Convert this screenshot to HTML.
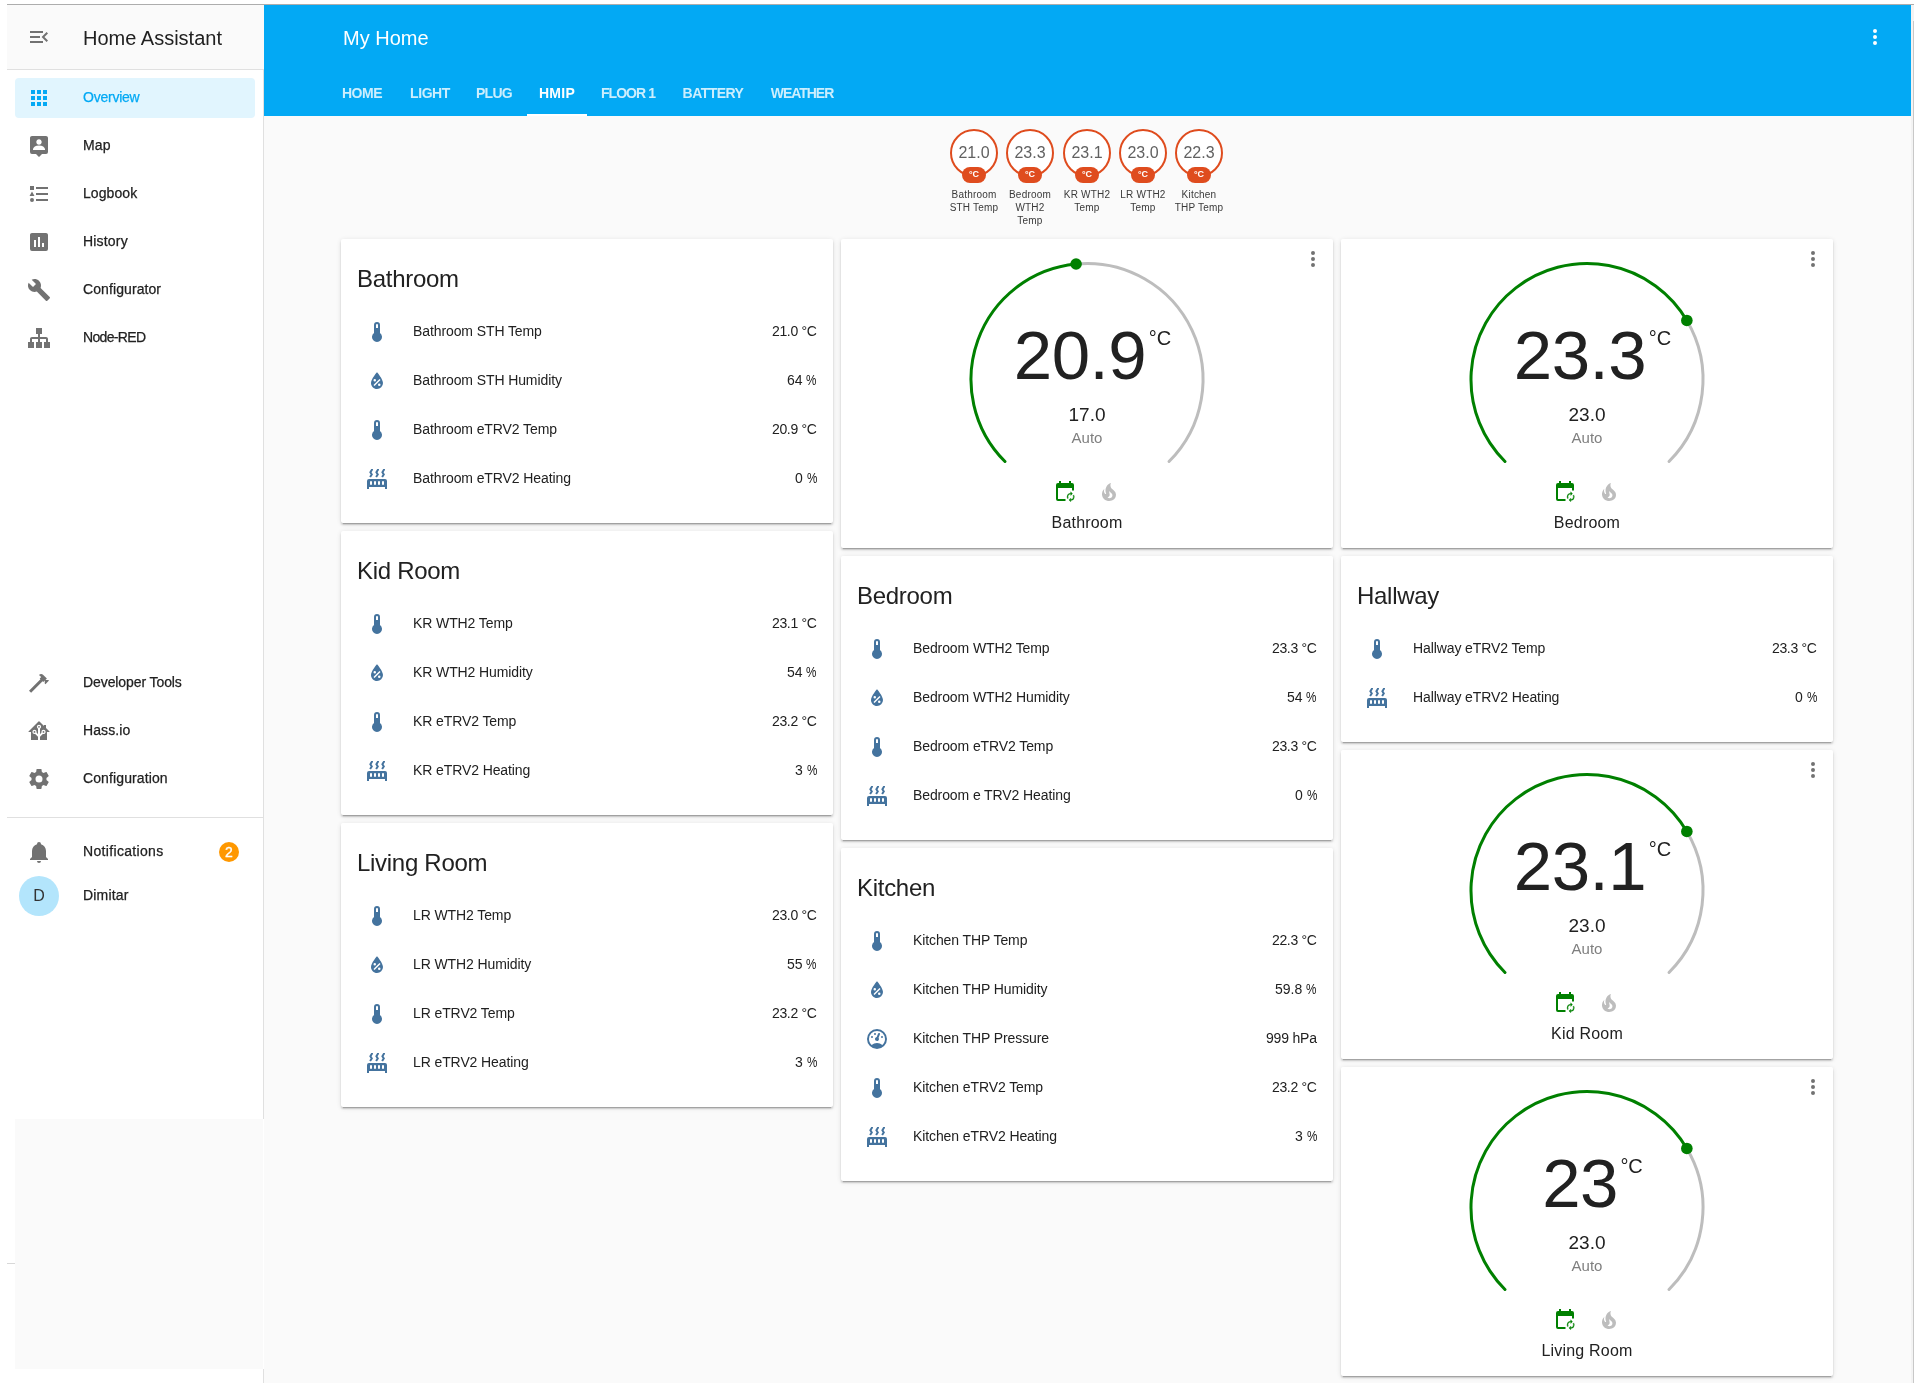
<!DOCTYPE html>
<html><head><meta charset="utf-8"><title>Home Assistant</title>
<style>
*{box-sizing:border-box;margin:0;padding:0}
html,body{width:1914px;height:1392px;overflow:hidden;background:#fff;font-family:"Liberation Sans",sans-serif;color:#212121}
.a{position:absolute}
.t{position:absolute;white-space:nowrap;will-change:transform}
.card{position:absolute;background:#fff;border-radius:2px;box-shadow:0 2px 2px 0 rgba(0,0,0,.14),0 1px 5px 0 rgba(0,0,0,.12),0 3px 1px -2px rgba(0,0,0,.2)}
</style></head><body>
<div class="a" style="left:7px;top:4px;width:1907px;height:1px;background:#adadad"></div>
<div class="a" style="left:264px;top:5px;width:1647px;height:1378px;background:#fafafa"></div>
<div class="a" style="left:7px;top:5px;width:257px;height:64px;background:#fafafa"></div>
<div class="a" style="left:7px;top:69px;width:257px;height:1px;background:#e0e0e0"></div>
<div class="a" style="left:7px;top:70px;width:256px;height:1049px;background:#fff"></div>
<div class="a" style="left:263px;top:70px;width:1px;height:1049px;background:#e0e0e0"></div>
<div class="a" style="left:15px;top:1119px;width:248px;height:250px;background:#fafafa"></div>
<div class="a" style="left:263px;top:1369px;width:1px;height:14px;background:#e0e0e0"></div>
<div class="a" style="left:7px;top:1263px;width:8px;height:1px;background:#d8d8d8"></div>
<div class="a" style="left:1911px;top:5px;width:3px;height:1378px;background:#f3f3f3"></div>
<div class="a" style="left:1913px;top:21px;width:1px;height:1362px;background:#c8c8c8"></div>
<svg class="a" style="left:27px;top:25px;width:24px;height:24px" viewBox="0 0 24 24"><path fill="#727272" d="M21,15.61L19.59,17L14.58,12L19.59,7L21,8.39L17.44,12L21,15.61M3,6H16V8H3V6M3,13V11H13V13H3M3,18V16H16V18H3Z"/></svg>
<div class="t" style="left:83.00px;top:27.57px;font-size:20px;line-height:20px;color:#212121;font-weight:400;">Home Assistant</div>
<div class="a" style="left:15px;top:78px;width:240px;height:40px;background:#e1f5fe;border-radius:4px"></div>
<svg class="a" style="left:27px;top:86px;width:24px;height:24px" viewBox="0 0 24 24"><path fill="#03a9f4" d="M16,20H20V16H16M16,14H20V10H16M10,8H14V4H10M16,8H20V4H16M10,14H14V10H10M4,14H8V10H4M4,20H8V16H4M10,20H14V16H10M4,8H8V4H4V8Z"/></svg>
<div class="t" style="left:83.00px;top:90.05px;font-size:14px;line-height:14px;color:#03a9f4;font-weight:400;-webkit-text-stroke:0.25px;letter-spacing:-0.24px">Overview</div>
<svg class="a" style="left:27px;top:134px;width:24px;height:24px" viewBox="0 0 24 24"><path fill="#727272" d="M18,16H6V15.1C6.45,13.1 8.39,11.5 12,11.5C15.61,11.5 17.55,13.1 18,15.1V16M12,5.3C13.5,5.3 14.7,6.5 14.7,8C14.7,9.5 13.5,10.7 12,10.7C10.5,10.7 9.3,9.5 9.3,8C9.3,6.5 10.5,5.3 12,5.3M19,2H5C3.89,2 3,2.89 3,4V18A2,2 0 0,0 5,20H9L12,23L15,20H19A2,2 0 0,0 21,18V4C21,2.89 20.1,2 19,2Z"/></svg>
<div class="t" style="left:83.00px;top:138.05px;font-size:14px;line-height:14px;color:#212121;font-weight:400;-webkit-text-stroke:0.25px;letter-spacing:0.1px">Map</div>
<svg class="a" style="left:27px;top:182px;width:24px;height:24px" viewBox="0 0 24 24"><path fill="#727272" d="M5,9.5L7.5,14H2.5L5,9.5M3,4H7V8H3V4M5,20A2,2 0 0,0 7,18A2,2 0 0,0 5,16A2,2 0 0,0 3,18A2,2 0 0,0 5,20M9,5V7H21V5H9M9,19H21V17H9V19M9,13H21V11H9V13Z"/></svg>
<div class="t" style="left:83.00px;top:186.05px;font-size:14px;line-height:14px;color:#212121;font-weight:400;-webkit-text-stroke:0.25px;letter-spacing:0.07px">Logbook</div>
<svg class="a" style="left:27px;top:230px;width:24px;height:24px" viewBox="0 0 24 24"><path fill="#727272" d="M17,17H15V13H17M13,17H11V7H13M9,17H7V10H9M19,3H5C3.89,3 3,3.89 3,5V19A2,2 0 0,0 5,21H19A2,2 0 0,0 21,19V5C21,3.89 20.1,3 19,3Z"/></svg>
<div class="t" style="left:83.00px;top:234.05px;font-size:14px;line-height:14px;color:#212121;font-weight:400;-webkit-text-stroke:0.25px;letter-spacing:0.18px">History</div>
<svg class="a" style="left:27px;top:278px;width:24px;height:24px" viewBox="0 0 24 24"><path fill="#727272" d="M22.7,19L13.6,9.9C14.5,7.6 14,4.9 12.1,3C10.1,1 7.1,0.6 4.7,1.7L9,6L6,9L1.6,4.7C0.4,7.1 0.9,10.1 2.9,12.1C4.8,14 7.5,14.5 9.8,13.6L18.9,22.7C19.3,23.1 19.9,23.1 20.3,22.7L22.6,20.4C23.1,20 23.1,19.3 22.7,19Z"/></svg>
<div class="t" style="left:83.00px;top:282.05px;font-size:14px;line-height:14px;color:#212121;font-weight:400;-webkit-text-stroke:0.25px;letter-spacing:0.09px">Configurator</div>
<svg class="a" style="left:27px;top:326px;width:24px;height:24px" viewBox="0 0 24 24"><path fill="#727272" d="M9,2V8H11V11H5C3.89,11 3,11.89 3,13V16H1V22H7V16H5V13H11V16H9V22H15V16H13V13H19V16H17V22H23V16H21V13C21,11.89 20.11,11 19,11H13V8H15V2H9Z"/></svg>
<div class="t" style="left:83.00px;top:330.05px;font-size:14px;line-height:14px;color:#212121;font-weight:400;-webkit-text-stroke:0.25px;letter-spacing:-0.66px">Node-RED</div>
<svg class="a" style="left:27px;top:671px;width:24px;height:24px" viewBox="0 0 24 24"><path fill="#727272" d="M2,19.63L13.43,8.2L12.72,7.5L14.14,6.07L12,3.89C13.2,2.7 15.09,2.7 16.27,3.89L19.87,7.5L18.45,8.91H21.29L22,9.62L18.45,13.21L17.74,12.5V9.62L16.27,11.04L15.56,10.33L4.13,21.76L2,19.63Z"/></svg>
<div class="t" style="left:83.00px;top:675.15px;font-size:14px;line-height:14px;color:#212121;font-weight:400;-webkit-text-stroke:0.25px;letter-spacing:-0.09px">Developer Tools</div>
<svg class="a" style="left:27px;top:719px;width:24px;height:24px" viewBox="0 0 24 24"><path fill="#727272" d="M21.8,13H20V21H13V17.67L15.79,14.88L16.5,15C17.66,15 18.6,14.06 18.6,12.9C18.6,11.74 17.66,10.8 16.5,10.8A2.1,2.1 0 0,0 14.4,12.9L14.5,13.61L13,15.13V9.65C13.66,9.29 14.1,8.6 14.1,7.8A2.1,2.1 0 0,0 12,5.7A2.1,2.1 0 0,0 9.9,7.8C9.9,8.6 10.34,9.29 11,9.65V15.13L9.5,13.61L9.6,12.9A2.1,2.1 0 0,0 7.5,10.8A2.1,2.1 0 0,0 5.4,12.9A2.1,2.1 0 0,0 7.5,15L8.21,14.88L11,17.67V21H4V13H2.25C1.83,13 1.42,13 1.42,12.79C1.43,12.57 1.85,12.15 2.28,11.72L11,3C11.33,2.67 11.67,2.33 12,2.33C12.33,2.33 12.67,2.67 13,3L17,7V6H19V9L21.78,11.78C22.18,12.18 22.59,12.59 22.6,12.8C22.6,13 22.2,13 21.8,13M7.5,12A0.9,0.9 0 0,1 8.4,12.9A0.9,0.9 0 0,1 7.5,13.8A0.9,0.9 0 0,1 6.6,12.9A0.9,0.9 0 0,1 7.5,12M16.5,12C17,12 17.4,12.4 17.4,12.9C17.4,13.4 17,13.8 16.5,13.8A0.9,0.9 0 0,1 15.6,12.9A0.9,0.9 0 0,1 16.5,12M12,6.9C12.5,6.9 12.9,7.3 12.9,7.8C12.9,8.3 12.5,8.7 12,8.7C11.5,8.7 11.1,8.3 11.1,7.8C11.1,7.3 11.5,6.9 12,6.9Z"/></svg>
<div class="t" style="left:83.00px;top:723.15px;font-size:14px;line-height:14px;color:#212121;font-weight:400;-webkit-text-stroke:0.25px;letter-spacing:0.1px">Hass.io</div>
<svg class="a" style="left:27px;top:767px;width:24px;height:24px" viewBox="0 0 24 24"><path fill="#727272" d="M12,15.5A3.5,3.5 0 0,1 8.5,12A3.5,3.5 0 0,1 12,8.5A3.5,3.5 0 0,1 15.5,12A3.5,3.5 0 0,1 12,15.5M19.43,12.97C19.47,12.65 19.5,12.33 19.5,12C19.5,11.67 19.47,11.34 19.43,11L21.54,9.37C21.73,9.22 21.78,8.95 21.66,8.73L19.66,5.27C19.54,5.05 19.27,4.96 19.05,5.05L16.56,6.05C16.04,5.66 15.5,5.32 14.87,5.07L14.5,2.42C14.46,2.18 14.25,2 14,2H10C9.75,2 9.54,2.18 9.5,2.42L9.13,5.07C8.5,5.32 7.96,5.66 7.44,6.05L4.95,5.05C4.73,4.96 4.46,5.05 4.34,5.27L2.34,8.73C2.21,8.95 2.27,9.22 2.46,9.37L4.57,11C4.53,11.34 4.5,11.67 4.5,12C4.5,12.33 4.53,12.65 4.57,12.97L2.46,14.63C2.27,14.78 2.21,15.05 2.34,15.27L4.34,18.73C4.46,18.95 4.73,19.03 4.95,18.95L7.44,17.94C7.96,18.34 8.5,18.68 9.13,18.93L9.5,21.58C9.54,21.82 9.75,22 10,22H14C14.25,22 14.46,21.82 14.5,21.58L14.87,18.93C15.5,18.67 16.04,18.34 16.56,17.94L19.05,18.95C19.27,19.03 19.54,18.95 19.66,18.73L21.66,15.27C21.78,15.05 21.73,14.78 21.54,14.63L19.43,12.97Z"/></svg>
<div class="t" style="left:83.00px;top:771.15px;font-size:14px;line-height:14px;color:#212121;font-weight:400;-webkit-text-stroke:0.25px;letter-spacing:0.11px">Configuration</div>
<div class="a" style="left:7px;top:817px;width:256px;height:1px;background:#e0e0e0"></div>
<svg class="a" style="left:27px;top:840px;width:24px;height:24px" viewBox="0 0 24 24"><path fill="#727272" d="M21,19V20H3V19L5,17V11C5,7.9 7.03,5.17 10,4.29C10,4.19 10,4.1 10,4A2,2 0 0,1 12,2A2,2 0 0,1 14,4C14,4.1 14,4.19 14,4.29C16.97,5.17 19,7.9 19,11V17L21,19M14,21A2,2 0 0,1 12,23A2,2 0 0,1 10,21"/></svg>
<div class="t" style="left:83.00px;top:844.15px;font-size:14px;line-height:14px;color:#212121;font-weight:400;-webkit-text-stroke:0.25px;letter-spacing:0.33px">Notifications</div>
<div class="a" style="left:219px;top:842px;width:20px;height:20px;border-radius:50%;background:#ff9800"></div>
<div class="t" style="left:-71.00px;width:600px;text-align:center;top:845.15px;font-size:14px;line-height:14px;color:#fff;font-weight:400;-webkit-text-stroke:0.3px">2</div>
<div class="a" style="left:19px;top:876px;width:40px;height:40px;border-radius:50%;background:#b3e5fc"></div>
<div class="t" style="left:-261.00px;width:600px;text-align:center;top:887.96px;font-size:16px;line-height:16px;color:#333;font-weight:400;">D</div>
<div class="t" style="left:83.00px;top:888.15px;font-size:14px;line-height:14px;color:#212121;font-weight:400;-webkit-text-stroke:0.25px;letter-spacing:0.18px">Dimitar</div>
<div class="a" style="left:264px;top:5px;width:1647px;height:111px;background:#03a9f4"></div>
<div class="t" style="left:343.00px;top:27.57px;font-size:20px;line-height:20px;color:#fff;font-weight:400;">My Home</div>
<svg class="a" style="left:1863px;top:25px;width:24px;height:24px" viewBox="0 0 24 24"><path fill="#fff" d="M12,16A2,2 0 0,1 14,18A2,2 0 0,1 12,20A2,2 0 0,1 10,18A2,2 0 0,1 12,16M12,10A2,2 0 0,1 14,12A2,2 0 0,1 12,14A2,2 0 0,1 10,12A2,2 0 0,1 12,10M12,4A2,2 0 0,1 14,6A2,2 0 0,1 12,8A2,2 0 0,1 10,6A2,2 0 0,1 12,4Z"/></svg>
<div class="t" style="left:62.31px;width:600px;text-align:center;top:86.15px;font-size:14px;line-height:14px;color:rgba(255,255,255,0.8);font-weight:700;letter-spacing:-0.47px">HOME</div>
<div class="t" style="left:129.54px;width:600px;text-align:center;top:86.15px;font-size:14px;line-height:14px;color:rgba(255,255,255,0.8);font-weight:700;letter-spacing:-0.42px">LIGHT</div>
<div class="t" style="left:193.99px;width:600px;text-align:center;top:86.15px;font-size:14px;line-height:14px;color:rgba(255,255,255,0.8);font-weight:700;letter-spacing:-0.73px">PLUG</div>
<div class="t" style="left:257.15px;width:600px;text-align:center;top:86.15px;font-size:14px;line-height:14px;color:#fff;font-weight:700;letter-spacing:0.3px">HMIP</div>
<div class="t" style="left:328.49px;width:600px;text-align:center;top:86.15px;font-size:14px;line-height:14px;color:rgba(255,255,255,0.8);font-weight:700;letter-spacing:-0.92px">FLOOR 1</div>
<div class="t" style="left:413.33px;width:600px;text-align:center;top:86.15px;font-size:14px;line-height:14px;color:rgba(255,255,255,0.8);font-weight:700;letter-spacing:-0.53px">BATTERY</div>
<div class="t" style="left:502.28px;width:600px;text-align:center;top:86.15px;font-size:14px;line-height:14px;color:rgba(255,255,255,0.8);font-weight:700;letter-spacing:-1.03px">WEATHER</div>
<div class="a" style="left:527px;top:114px;width:60px;height:2px;background:#fff"></div>
<div class="a" style="left:950px;top:129px;width:48px;height:48px;border-radius:50%;border:2.2px solid #df4c1e;background:#fff"></div>
<div class="t" style="left:674.00px;width:600px;text-align:center;top:145.06px;font-size:16px;line-height:16px;color:#616161;font-weight:400;">21.0</div>
<div class="a" style="left:962px;top:167px;width:24px;height:16px;border-radius:8px;background:#df4c1e"></div>
<div class="t" style="left:674.00px;width:600px;text-align:center;top:170.38px;font-size:9px;line-height:9px;color:#fff;font-weight:700;">&deg;C</div>
<div class="t" style="left:674.00px;width:600px;text-align:center;top:190.13px;font-size:10px;line-height:10px;color:#3a3a3a;font-weight:400;letter-spacing:0.2px">Bathroom</div>
<div class="t" style="left:674.00px;width:600px;text-align:center;top:203.03px;font-size:10px;line-height:10px;color:#3a3a3a;font-weight:400;letter-spacing:0.2px">STH Temp</div>
<div class="a" style="left:1006px;top:129px;width:48px;height:48px;border-radius:50%;border:2.2px solid #df4c1e;background:#fff"></div>
<div class="t" style="left:730.00px;width:600px;text-align:center;top:145.06px;font-size:16px;line-height:16px;color:#616161;font-weight:400;">23.3</div>
<div class="a" style="left:1018px;top:167px;width:24px;height:16px;border-radius:8px;background:#df4c1e"></div>
<div class="t" style="left:730.00px;width:600px;text-align:center;top:170.38px;font-size:9px;line-height:9px;color:#fff;font-weight:700;">&deg;C</div>
<div class="t" style="left:730.00px;width:600px;text-align:center;top:190.13px;font-size:10px;line-height:10px;color:#3a3a3a;font-weight:400;letter-spacing:0.2px">Bedroom</div>
<div class="t" style="left:730.00px;width:600px;text-align:center;top:203.03px;font-size:10px;line-height:10px;color:#3a3a3a;font-weight:400;letter-spacing:0.2px">WTH2</div>
<div class="t" style="left:730.00px;width:600px;text-align:center;top:215.94px;font-size:10px;line-height:10px;color:#3a3a3a;font-weight:400;letter-spacing:0.2px">Temp</div>
<div class="a" style="left:1063px;top:129px;width:48px;height:48px;border-radius:50%;border:2.2px solid #df4c1e;background:#fff"></div>
<div class="t" style="left:787.00px;width:600px;text-align:center;top:145.06px;font-size:16px;line-height:16px;color:#616161;font-weight:400;">23.1</div>
<div class="a" style="left:1075px;top:167px;width:24px;height:16px;border-radius:8px;background:#df4c1e"></div>
<div class="t" style="left:787.00px;width:600px;text-align:center;top:170.38px;font-size:9px;line-height:9px;color:#fff;font-weight:700;">&deg;C</div>
<div class="t" style="left:787.00px;width:600px;text-align:center;top:190.13px;font-size:10px;line-height:10px;color:#3a3a3a;font-weight:400;letter-spacing:0.2px">KR WTH2</div>
<div class="t" style="left:787.00px;width:600px;text-align:center;top:203.03px;font-size:10px;line-height:10px;color:#3a3a3a;font-weight:400;letter-spacing:0.2px">Temp</div>
<div class="a" style="left:1119px;top:129px;width:48px;height:48px;border-radius:50%;border:2.2px solid #df4c1e;background:#fff"></div>
<div class="t" style="left:843.00px;width:600px;text-align:center;top:145.06px;font-size:16px;line-height:16px;color:#616161;font-weight:400;">23.0</div>
<div class="a" style="left:1131px;top:167px;width:24px;height:16px;border-radius:8px;background:#df4c1e"></div>
<div class="t" style="left:843.00px;width:600px;text-align:center;top:170.38px;font-size:9px;line-height:9px;color:#fff;font-weight:700;">&deg;C</div>
<div class="t" style="left:843.00px;width:600px;text-align:center;top:190.13px;font-size:10px;line-height:10px;color:#3a3a3a;font-weight:400;letter-spacing:0.2px">LR WTH2</div>
<div class="t" style="left:843.00px;width:600px;text-align:center;top:203.03px;font-size:10px;line-height:10px;color:#3a3a3a;font-weight:400;letter-spacing:0.2px">Temp</div>
<div class="a" style="left:1175px;top:129px;width:48px;height:48px;border-radius:50%;border:2.2px solid #df4c1e;background:#fff"></div>
<div class="t" style="left:899.00px;width:600px;text-align:center;top:145.06px;font-size:16px;line-height:16px;color:#616161;font-weight:400;">22.3</div>
<div class="a" style="left:1187px;top:167px;width:24px;height:16px;border-radius:8px;background:#df4c1e"></div>
<div class="t" style="left:899.00px;width:600px;text-align:center;top:170.38px;font-size:9px;line-height:9px;color:#fff;font-weight:700;">&deg;C</div>
<div class="t" style="left:899.00px;width:600px;text-align:center;top:190.13px;font-size:10px;line-height:10px;color:#3a3a3a;font-weight:400;letter-spacing:0.2px">Kitchen</div>
<div class="t" style="left:899.00px;width:600px;text-align:center;top:203.03px;font-size:10px;line-height:10px;color:#3a3a3a;font-weight:400;letter-spacing:0.2px">THP Temp</div>
<div class="card" style="left:341px;top:239px;width:492px;height:284px"></div>
<div class="t" style="left:357.00px;top:266.98px;font-size:24px;line-height:24px;color:#212121;font-weight:400;letter-spacing:-0.29px">Bathroom</div>
<svg class="a" style="left:365px;top:320px;width:24px;height:24px" viewBox="0 0 24 24"><path fill="#44739e" d="M15,13V5A3,3 0 0,0 9,5V13A5,5 0 1,0 15,13M12,4A1,1 0 0,1 13,5V8H11V5A1,1 0 0,1 12,4Z"/></svg>
<div class="t" style="left:413.00px;top:323.95px;font-size:14px;line-height:14px;color:#212121;font-weight:400;letter-spacing:-0.1px">Bathroom STH Temp</div>
<div class="t" style="right:1097.35px;top:323.95px;font-size:14px;line-height:14px;color:#212121;font-weight:400;text-align:right;letter-spacing:-0.35px">21.0 °C</div>
<svg class="a" style="left:365px;top:369px;width:24px;height:24px" viewBox="0 0 24 24"><path fill="#44739e" d="M12,3.25C12,3.25 6,10 6,14C6,17.32 8.69,20 12,20A6,6 0 0,0 18,14C18,10 12,3.25 12,3.25M14.47,9.97L15.53,11.03L9.53,17.03L8.47,15.97M9.75,10A1.25,1.25 0 0,1 11,11.25A1.25,1.25 0 0,1 9.75,12.5A1.25,1.25 0 0,1 8.5,11.25A1.25,1.25 0 0,1 9.75,10M14.25,14.5A1.25,1.25 0 0,1 15.5,15.75A1.25,1.25 0 0,1 14.25,17A1.25,1.25 0 0,1 13,15.75A1.25,1.25 0 0,1 14.25,14.5Z"/></svg>
<div class="t" style="left:413.00px;top:372.95px;font-size:14px;line-height:14px;color:#212121;font-weight:400;letter-spacing:-0.1px">Bathroom STH Humidity</div>
<div class="t" style="right:1097.00px;top:372.95px;font-size:14px;line-height:14px;color:#212121;font-weight:400;text-align:right;letter-spacing:0px">64 <span style="display:inline-block;width:10.4px;overflow:visible"><span style="display:inline-block;transform:scaleX(0.84);transform-origin:0 0">%</span></span></div>
<svg class="a" style="left:365px;top:418px;width:24px;height:24px" viewBox="0 0 24 24"><path fill="#44739e" d="M15,13V5A3,3 0 0,0 9,5V13A5,5 0 1,0 15,13M12,4A1,1 0 0,1 13,5V8H11V5A1,1 0 0,1 12,4Z"/></svg>
<div class="t" style="left:413.00px;top:421.95px;font-size:14px;line-height:14px;color:#212121;font-weight:400;letter-spacing:-0.1px">Bathroom eTRV2 Temp</div>
<div class="t" style="right:1097.35px;top:421.95px;font-size:14px;line-height:14px;color:#212121;font-weight:400;text-align:right;letter-spacing:-0.35px">20.9 °C</div>
<svg class="a" style="left:365px;top:467px;width:24px;height:24px" viewBox="0 0 24 24"><path fill="#44739e" d="M7.95,3L6.53,5.19L7.95,7.4H7.94L5.95,10.5L4.22,9.5L5.64,7.39L4.22,5.19L6.22,2H7.95V3M13.96,3L12.54,5.19L13.96,7.4H13.95L11.96,10.5L10.23,9.5L11.65,7.39L10.23,5.19L12.23,2H13.96V3M19.97,3L18.55,5.19L19.97,7.4H19.96L17.97,10.5L16.24,9.5L17.66,7.39L16.24,5.19L18.24,2H19.97V3M2,22V14A2,2 0 0,1 4,12H20A2,2 0 0,1 22,14V22H20V20H4V22H2M6,14A1,1 0 0,0 5,15V17A1,1 0 0,0 6,18A1,1 0 0,0 7,17V15A1,1 0 0,0 6,14M10,14A1,1 0 0,0 9,15V17A1,1 0 0,0 10,18A1,1 0 0,0 11,17V15A1,1 0 0,0 10,14M14,14A1,1 0 0,0 13,15V17A1,1 0 0,0 14,18A1,1 0 0,0 15,17V15A1,1 0 0,0 14,14M18,14A1,1 0 0,0 17,15V17A1,1 0 0,0 18,18A1,1 0 0,0 19,17V15A1,1 0 0,0 18,14Z"/></svg>
<div class="t" style="left:413.00px;top:470.95px;font-size:14px;line-height:14px;color:#212121;font-weight:400;letter-spacing:-0.1px">Bathroom eTRV2 Heating</div>
<div class="t" style="right:1097.00px;top:470.95px;font-size:14px;line-height:14px;color:#212121;font-weight:400;text-align:right;letter-spacing:0px">0 <span style="display:inline-block;width:10.4px;overflow:visible"><span style="display:inline-block;transform:scaleX(0.84);transform-origin:0 0">%</span></span></div>
<div class="card" style="left:341px;top:531px;width:492px;height:284px"></div>
<div class="t" style="left:357.00px;top:558.98px;font-size:24px;line-height:24px;color:#212121;font-weight:400;letter-spacing:-0.29px">Kid Room</div>
<svg class="a" style="left:365px;top:612px;width:24px;height:24px" viewBox="0 0 24 24"><path fill="#44739e" d="M15,13V5A3,3 0 0,0 9,5V13A5,5 0 1,0 15,13M12,4A1,1 0 0,1 13,5V8H11V5A1,1 0 0,1 12,4Z"/></svg>
<div class="t" style="left:413.00px;top:615.95px;font-size:14px;line-height:14px;color:#212121;font-weight:400;letter-spacing:-0.1px">KR WTH2 Temp</div>
<div class="t" style="right:1097.35px;top:615.95px;font-size:14px;line-height:14px;color:#212121;font-weight:400;text-align:right;letter-spacing:-0.35px">23.1 °C</div>
<svg class="a" style="left:365px;top:661px;width:24px;height:24px" viewBox="0 0 24 24"><path fill="#44739e" d="M12,3.25C12,3.25 6,10 6,14C6,17.32 8.69,20 12,20A6,6 0 0,0 18,14C18,10 12,3.25 12,3.25M14.47,9.97L15.53,11.03L9.53,17.03L8.47,15.97M9.75,10A1.25,1.25 0 0,1 11,11.25A1.25,1.25 0 0,1 9.75,12.5A1.25,1.25 0 0,1 8.5,11.25A1.25,1.25 0 0,1 9.75,10M14.25,14.5A1.25,1.25 0 0,1 15.5,15.75A1.25,1.25 0 0,1 14.25,17A1.25,1.25 0 0,1 13,15.75A1.25,1.25 0 0,1 14.25,14.5Z"/></svg>
<div class="t" style="left:413.00px;top:664.95px;font-size:14px;line-height:14px;color:#212121;font-weight:400;letter-spacing:-0.1px">KR WTH2 Humidity</div>
<div class="t" style="right:1097.00px;top:664.95px;font-size:14px;line-height:14px;color:#212121;font-weight:400;text-align:right;letter-spacing:0px">54 <span style="display:inline-block;width:10.4px;overflow:visible"><span style="display:inline-block;transform:scaleX(0.84);transform-origin:0 0">%</span></span></div>
<svg class="a" style="left:365px;top:710px;width:24px;height:24px" viewBox="0 0 24 24"><path fill="#44739e" d="M15,13V5A3,3 0 0,0 9,5V13A5,5 0 1,0 15,13M12,4A1,1 0 0,1 13,5V8H11V5A1,1 0 0,1 12,4Z"/></svg>
<div class="t" style="left:413.00px;top:713.95px;font-size:14px;line-height:14px;color:#212121;font-weight:400;letter-spacing:-0.1px">KR eTRV2 Temp</div>
<div class="t" style="right:1097.35px;top:713.95px;font-size:14px;line-height:14px;color:#212121;font-weight:400;text-align:right;letter-spacing:-0.35px">23.2 °C</div>
<svg class="a" style="left:365px;top:759px;width:24px;height:24px" viewBox="0 0 24 24"><path fill="#44739e" d="M7.95,3L6.53,5.19L7.95,7.4H7.94L5.95,10.5L4.22,9.5L5.64,7.39L4.22,5.19L6.22,2H7.95V3M13.96,3L12.54,5.19L13.96,7.4H13.95L11.96,10.5L10.23,9.5L11.65,7.39L10.23,5.19L12.23,2H13.96V3M19.97,3L18.55,5.19L19.97,7.4H19.96L17.97,10.5L16.24,9.5L17.66,7.39L16.24,5.19L18.24,2H19.97V3M2,22V14A2,2 0 0,1 4,12H20A2,2 0 0,1 22,14V22H20V20H4V22H2M6,14A1,1 0 0,0 5,15V17A1,1 0 0,0 6,18A1,1 0 0,0 7,17V15A1,1 0 0,0 6,14M10,14A1,1 0 0,0 9,15V17A1,1 0 0,0 10,18A1,1 0 0,0 11,17V15A1,1 0 0,0 10,14M14,14A1,1 0 0,0 13,15V17A1,1 0 0,0 14,18A1,1 0 0,0 15,17V15A1,1 0 0,0 14,14M18,14A1,1 0 0,0 17,15V17A1,1 0 0,0 18,18A1,1 0 0,0 19,17V15A1,1 0 0,0 18,14Z"/></svg>
<div class="t" style="left:413.00px;top:762.95px;font-size:14px;line-height:14px;color:#212121;font-weight:400;letter-spacing:-0.1px">KR eTRV2 Heating</div>
<div class="t" style="right:1097.00px;top:762.95px;font-size:14px;line-height:14px;color:#212121;font-weight:400;text-align:right;letter-spacing:0px">3 <span style="display:inline-block;width:10.4px;overflow:visible"><span style="display:inline-block;transform:scaleX(0.84);transform-origin:0 0">%</span></span></div>
<div class="card" style="left:341px;top:823px;width:492px;height:284px"></div>
<div class="t" style="left:357.00px;top:850.98px;font-size:24px;line-height:24px;color:#212121;font-weight:400;letter-spacing:-0.29px">Living Room</div>
<svg class="a" style="left:365px;top:904px;width:24px;height:24px" viewBox="0 0 24 24"><path fill="#44739e" d="M15,13V5A3,3 0 0,0 9,5V13A5,5 0 1,0 15,13M12,4A1,1 0 0,1 13,5V8H11V5A1,1 0 0,1 12,4Z"/></svg>
<div class="t" style="left:413.00px;top:907.95px;font-size:14px;line-height:14px;color:#212121;font-weight:400;letter-spacing:-0.1px">LR WTH2 Temp</div>
<div class="t" style="right:1097.35px;top:907.95px;font-size:14px;line-height:14px;color:#212121;font-weight:400;text-align:right;letter-spacing:-0.35px">23.0 °C</div>
<svg class="a" style="left:365px;top:953px;width:24px;height:24px" viewBox="0 0 24 24"><path fill="#44739e" d="M12,3.25C12,3.25 6,10 6,14C6,17.32 8.69,20 12,20A6,6 0 0,0 18,14C18,10 12,3.25 12,3.25M14.47,9.97L15.53,11.03L9.53,17.03L8.47,15.97M9.75,10A1.25,1.25 0 0,1 11,11.25A1.25,1.25 0 0,1 9.75,12.5A1.25,1.25 0 0,1 8.5,11.25A1.25,1.25 0 0,1 9.75,10M14.25,14.5A1.25,1.25 0 0,1 15.5,15.75A1.25,1.25 0 0,1 14.25,17A1.25,1.25 0 0,1 13,15.75A1.25,1.25 0 0,1 14.25,14.5Z"/></svg>
<div class="t" style="left:413.00px;top:956.95px;font-size:14px;line-height:14px;color:#212121;font-weight:400;letter-spacing:-0.1px">LR WTH2 Humidity</div>
<div class="t" style="right:1097.00px;top:956.95px;font-size:14px;line-height:14px;color:#212121;font-weight:400;text-align:right;letter-spacing:0px">55 <span style="display:inline-block;width:10.4px;overflow:visible"><span style="display:inline-block;transform:scaleX(0.84);transform-origin:0 0">%</span></span></div>
<svg class="a" style="left:365px;top:1002px;width:24px;height:24px" viewBox="0 0 24 24"><path fill="#44739e" d="M15,13V5A3,3 0 0,0 9,5V13A5,5 0 1,0 15,13M12,4A1,1 0 0,1 13,5V8H11V5A1,1 0 0,1 12,4Z"/></svg>
<div class="t" style="left:413.00px;top:1005.95px;font-size:14px;line-height:14px;color:#212121;font-weight:400;letter-spacing:-0.1px">LR eTRV2 Temp</div>
<div class="t" style="right:1097.35px;top:1005.95px;font-size:14px;line-height:14px;color:#212121;font-weight:400;text-align:right;letter-spacing:-0.35px">23.2 °C</div>
<svg class="a" style="left:365px;top:1051px;width:24px;height:24px" viewBox="0 0 24 24"><path fill="#44739e" d="M7.95,3L6.53,5.19L7.95,7.4H7.94L5.95,10.5L4.22,9.5L5.64,7.39L4.22,5.19L6.22,2H7.95V3M13.96,3L12.54,5.19L13.96,7.4H13.95L11.96,10.5L10.23,9.5L11.65,7.39L10.23,5.19L12.23,2H13.96V3M19.97,3L18.55,5.19L19.97,7.4H19.96L17.97,10.5L16.24,9.5L17.66,7.39L16.24,5.19L18.24,2H19.97V3M2,22V14A2,2 0 0,1 4,12H20A2,2 0 0,1 22,14V22H20V20H4V22H2M6,14A1,1 0 0,0 5,15V17A1,1 0 0,0 6,18A1,1 0 0,0 7,17V15A1,1 0 0,0 6,14M10,14A1,1 0 0,0 9,15V17A1,1 0 0,0 10,18A1,1 0 0,0 11,17V15A1,1 0 0,0 10,14M14,14A1,1 0 0,0 13,15V17A1,1 0 0,0 14,18A1,1 0 0,0 15,17V15A1,1 0 0,0 14,14M18,14A1,1 0 0,0 17,15V17A1,1 0 0,0 18,18A1,1 0 0,0 19,17V15A1,1 0 0,0 18,14Z"/></svg>
<div class="t" style="left:413.00px;top:1054.95px;font-size:14px;line-height:14px;color:#212121;font-weight:400;letter-spacing:-0.1px">LR eTRV2 Heating</div>
<div class="t" style="right:1097.00px;top:1054.95px;font-size:14px;line-height:14px;color:#212121;font-weight:400;text-align:right;letter-spacing:0px">3 <span style="display:inline-block;width:10.4px;overflow:visible"><span style="display:inline-block;transform:scaleX(0.84);transform-origin:0 0">%</span></span></div>
<div class="card" style="left:841px;top:239px;width:492px;height:309px"></div>
<svg class="a" style="left:841px;top:239px;width:492px;height:309px" viewBox="841 239 492 309"><path d="M1076.08,264.01 A116,116 0 0,1 1169.02,461.52" fill="none" stroke="#bdbdbd" stroke-width="3" stroke-linecap="round"/><path d="M1004.98,461.52 A116,116 0 0,1 1076.08,264.01" fill="none" stroke="#008000" stroke-width="3" stroke-linecap="round"/><circle cx="1076.08" cy="264.01" r="5.8" fill="#008000"/></svg>
<svg class="a" style="left:1301px;top:247px;width:24px;height:24px" viewBox="0 0 24 24"><path fill="#727272" d="M12,16A2,2 0 0,1 14,18A2,2 0 0,1 12,20A2,2 0 0,1 10,18A2,2 0 0,1 12,16M12,10A2,2 0 0,1 14,12A2,2 0 0,1 12,14A2,2 0 0,1 10,12A2,2 0 0,1 12,10M12,4A2,2 0 0,1 14,6A2,2 0 0,1 12,8A2,2 0 0,1 10,6A2,2 0 0,1 12,4Z"/></svg>
<div class="t" style="left:834.2px;width:492px;text-align:center;top:320.59px;font-size:69px;line-height:69px;color:#212121"><span style="position:relative;letter-spacing:-0.5px">20.9<span style="position:absolute;left:100%;top:11px;margin-left:2.5px;font-size:20px;line-height:20px;letter-spacing:0">&deg;C</span></span></div>
<div class="t" style="left:787.00px;width:600px;text-align:center;top:404.72px;font-size:19px;line-height:19px;color:#212121;font-weight:400;">17.0</div>
<div class="t" style="left:787.00px;width:600px;text-align:center;top:429.80px;font-size:15px;line-height:15px;color:#7f7f7f;font-weight:400;">Auto</div>
<svg class="a" style="left:1053px;top:480px;width:24px;height:24px" viewBox="0 0 24 24"><path fill="#008000" d="M6,1H8V3H16V1H18V3H19A2,2 0 0,1 21,5V10.5H19V8H5V19H12.5V21H5A2,2 0 0,1 3,19V5A2,2 0 0,1 5,3H6Z"/><path fill="#008000" transform="translate(17.7,16.8) scale(0.45) translate(-12,-12)" stroke="#008000" stroke-width="0.8" d="M12,6V9L16,5L12,1V4A8,8 0 0,0 4,12C4,13.57 4.46,15.03 5.24,16.26L6.7,14.8C6.25,13.97 6,13 6,12A6,6 0 0,1 12,6M18.76,7.74L17.3,9.2C17.74,10.04 18,11 18,12A6,6 0 0,1 12,18V15L8,19L12,23V20A8,8 0 0,0 20,12C20,10.43 19.54,8.97 18.76,7.74Z"/></svg>
<svg class="a" style="left:1097px;top:480px;width:24px;height:24px" viewBox="0 0 24 24"><path fill="#bdbdbd" d="M17.66,11.2C17.43,10.9 17.15,10.64 16.89,10.38C16.22,9.78 15.46,9.35 14.82,8.72C13.33,7.26 13,4.85 13.95,3C13,3.23 12.17,3.75 11.46,4.32C8.87,6.4 7.85,10.07 9.07,13.22C9.11,13.32 9.15,13.42 9.15,13.55C9.15,13.77 9,13.97 8.8,14.05C8.57,14.15 8.33,14.09 8.14,13.93C8.08,13.88 8.04,13.83 8,13.76C6.87,12.33 6.69,10.28 7.45,8.64C5.78,10 4.87,12.3 5,14.47C5.06,14.97 5.12,15.47 5.29,15.97C5.43,16.57 5.7,17.17 6,17.7C7.08,19.43 8.95,20.67 10.96,20.92C13.1,21.19 15.39,20.8 17.03,19.32C18.86,17.66 19.5,15 18.56,12.72L18.43,12.46C18.22,12 17.66,11.2 17.66,11.2M14.5,17.5C14.22,17.74 13.76,18 13.4,18.1C12.28,18.5 11.16,17.94 10.5,17.28C11.69,17 12.4,16.12 12.61,15.23C12.78,14.43 12.46,13.77 12.33,13C12.21,12.26 12.23,11.63 12.5,10.94C12.69,11.32 12.89,11.7 13.13,12C13.9,13 15.11,13.44 15.37,14.8C15.41,14.94 15.43,15.08 15.43,15.23C15.46,16.05 15.1,16.95 14.5,17.5H14.5Z"/></svg>
<div class="t" style="left:787.00px;width:600px;text-align:center;top:515.16px;font-size:16px;line-height:16px;color:#212121;font-weight:400;letter-spacing:0.2px">Bathroom</div>
<div class="card" style="left:841px;top:556px;width:492px;height:284px"></div>
<div class="t" style="left:857.00px;top:583.98px;font-size:24px;line-height:24px;color:#212121;font-weight:400;letter-spacing:-0.29px">Bedroom</div>
<svg class="a" style="left:865px;top:637px;width:24px;height:24px" viewBox="0 0 24 24"><path fill="#44739e" d="M15,13V5A3,3 0 0,0 9,5V13A5,5 0 1,0 15,13M12,4A1,1 0 0,1 13,5V8H11V5A1,1 0 0,1 12,4Z"/></svg>
<div class="t" style="left:913.00px;top:640.95px;font-size:14px;line-height:14px;color:#212121;font-weight:400;letter-spacing:-0.1px">Bedroom WTH2 Temp</div>
<div class="t" style="right:597.35px;top:640.95px;font-size:14px;line-height:14px;color:#212121;font-weight:400;text-align:right;letter-spacing:-0.35px">23.3 °C</div>
<svg class="a" style="left:865px;top:686px;width:24px;height:24px" viewBox="0 0 24 24"><path fill="#44739e" d="M12,3.25C12,3.25 6,10 6,14C6,17.32 8.69,20 12,20A6,6 0 0,0 18,14C18,10 12,3.25 12,3.25M14.47,9.97L15.53,11.03L9.53,17.03L8.47,15.97M9.75,10A1.25,1.25 0 0,1 11,11.25A1.25,1.25 0 0,1 9.75,12.5A1.25,1.25 0 0,1 8.5,11.25A1.25,1.25 0 0,1 9.75,10M14.25,14.5A1.25,1.25 0 0,1 15.5,15.75A1.25,1.25 0 0,1 14.25,17A1.25,1.25 0 0,1 13,15.75A1.25,1.25 0 0,1 14.25,14.5Z"/></svg>
<div class="t" style="left:913.00px;top:689.95px;font-size:14px;line-height:14px;color:#212121;font-weight:400;letter-spacing:-0.1px">Bedroom WTH2 Humidity</div>
<div class="t" style="right:597.00px;top:689.95px;font-size:14px;line-height:14px;color:#212121;font-weight:400;text-align:right;letter-spacing:0px">54 <span style="display:inline-block;width:10.4px;overflow:visible"><span style="display:inline-block;transform:scaleX(0.84);transform-origin:0 0">%</span></span></div>
<svg class="a" style="left:865px;top:735px;width:24px;height:24px" viewBox="0 0 24 24"><path fill="#44739e" d="M15,13V5A3,3 0 0,0 9,5V13A5,5 0 1,0 15,13M12,4A1,1 0 0,1 13,5V8H11V5A1,1 0 0,1 12,4Z"/></svg>
<div class="t" style="left:913.00px;top:738.95px;font-size:14px;line-height:14px;color:#212121;font-weight:400;letter-spacing:-0.1px">Bedroom eTRV2 Temp</div>
<div class="t" style="right:597.35px;top:738.95px;font-size:14px;line-height:14px;color:#212121;font-weight:400;text-align:right;letter-spacing:-0.35px">23.3 °C</div>
<svg class="a" style="left:865px;top:784px;width:24px;height:24px" viewBox="0 0 24 24"><path fill="#44739e" d="M7.95,3L6.53,5.19L7.95,7.4H7.94L5.95,10.5L4.22,9.5L5.64,7.39L4.22,5.19L6.22,2H7.95V3M13.96,3L12.54,5.19L13.96,7.4H13.95L11.96,10.5L10.23,9.5L11.65,7.39L10.23,5.19L12.23,2H13.96V3M19.97,3L18.55,5.19L19.97,7.4H19.96L17.97,10.5L16.24,9.5L17.66,7.39L16.24,5.19L18.24,2H19.97V3M2,22V14A2,2 0 0,1 4,12H20A2,2 0 0,1 22,14V22H20V20H4V22H2M6,14A1,1 0 0,0 5,15V17A1,1 0 0,0 6,18A1,1 0 0,0 7,17V15A1,1 0 0,0 6,14M10,14A1,1 0 0,0 9,15V17A1,1 0 0,0 10,18A1,1 0 0,0 11,17V15A1,1 0 0,0 10,14M14,14A1,1 0 0,0 13,15V17A1,1 0 0,0 14,18A1,1 0 0,0 15,17V15A1,1 0 0,0 14,14M18,14A1,1 0 0,0 17,15V17A1,1 0 0,0 18,18A1,1 0 0,0 19,17V15A1,1 0 0,0 18,14Z"/></svg>
<div class="t" style="left:913.00px;top:787.95px;font-size:14px;line-height:14px;color:#212121;font-weight:400;letter-spacing:-0.1px">Bedroom e TRV2 Heating</div>
<div class="t" style="right:597.00px;top:787.95px;font-size:14px;line-height:14px;color:#212121;font-weight:400;text-align:right;letter-spacing:0px">0 <span style="display:inline-block;width:10.4px;overflow:visible"><span style="display:inline-block;transform:scaleX(0.84);transform-origin:0 0">%</span></span></div>
<div class="card" style="left:841px;top:848px;width:492px;height:333px"></div>
<div class="t" style="left:857.00px;top:875.98px;font-size:24px;line-height:24px;color:#212121;font-weight:400;letter-spacing:-0.29px">Kitchen</div>
<svg class="a" style="left:865px;top:929px;width:24px;height:24px" viewBox="0 0 24 24"><path fill="#44739e" d="M15,13V5A3,3 0 0,0 9,5V13A5,5 0 1,0 15,13M12,4A1,1 0 0,1 13,5V8H11V5A1,1 0 0,1 12,4Z"/></svg>
<div class="t" style="left:913.00px;top:932.95px;font-size:14px;line-height:14px;color:#212121;font-weight:400;letter-spacing:-0.1px">Kitchen THP Temp</div>
<div class="t" style="right:597.35px;top:932.95px;font-size:14px;line-height:14px;color:#212121;font-weight:400;text-align:right;letter-spacing:-0.35px">22.3 °C</div>
<svg class="a" style="left:865px;top:978px;width:24px;height:24px" viewBox="0 0 24 24"><path fill="#44739e" d="M12,3.25C12,3.25 6,10 6,14C6,17.32 8.69,20 12,20A6,6 0 0,0 18,14C18,10 12,3.25 12,3.25M14.47,9.97L15.53,11.03L9.53,17.03L8.47,15.97M9.75,10A1.25,1.25 0 0,1 11,11.25A1.25,1.25 0 0,1 9.75,12.5A1.25,1.25 0 0,1 8.5,11.25A1.25,1.25 0 0,1 9.75,10M14.25,14.5A1.25,1.25 0 0,1 15.5,15.75A1.25,1.25 0 0,1 14.25,17A1.25,1.25 0 0,1 13,15.75A1.25,1.25 0 0,1 14.25,14.5Z"/></svg>
<div class="t" style="left:913.00px;top:981.95px;font-size:14px;line-height:14px;color:#212121;font-weight:400;letter-spacing:-0.1px">Kitchen THP Humidity</div>
<div class="t" style="right:597.00px;top:981.95px;font-size:14px;line-height:14px;color:#212121;font-weight:400;text-align:right;letter-spacing:0px">59.8 <span style="display:inline-block;width:10.4px;overflow:visible"><span style="display:inline-block;transform:scaleX(0.84);transform-origin:0 0">%</span></span></div>
<svg class="a" style="left:865px;top:1027px;width:24px;height:24px" viewBox="0 0 24 24"><path fill="#44739e" d="M12,2A10,10 0 0,0 2,12A10,10 0 0,0 12,22A10,10 0 0,0 22,12A10,10 0 0,0 12,2M12,4A8,8 0 0,1 20,12C20,14.4 19,16.5 17.3,18C15.9,16.7 14,16 12,16C10,16 8.2,16.7 6.7,18C5,16.5 4,14.4 4,12A8,8 0 0,1 12,4M14,5.89C13.62,5.9 13.26,6.15 13.1,6.54L11.81,9.77L11.71,10C11,10.13 10.41,10.6 10.14,11.26C9.73,12.29 10.23,13.45 11.26,13.86C12.29,14.27 13.45,13.77 13.86,12.74C14.12,12.08 14,11.32 13.57,10.76L13.67,10.5L14.96,7.29L14.97,7.26C15.17,6.75 14.92,6.17 14.41,5.96C14.28,5.91 14.15,5.89 14,5.89M10,6A1,1 0 0,0 9,7A1,1 0 0,0 10,8A1,1 0 0,0 11,7A1,1 0 0,0 10,6M7,9A1,1 0 0,0 6,10A1,1 0 0,0 7,11A1,1 0 0,0 8,10A1,1 0 0,0 7,9M17,9A1,1 0 0,0 16,10A1,1 0 0,0 17,11A1,1 0 0,0 18,10A1,1 0 0,0 17,9Z"/></svg>
<div class="t" style="left:913.00px;top:1030.95px;font-size:14px;line-height:14px;color:#212121;font-weight:400;letter-spacing:-0.1px">Kitchen THP Pressure</div>
<div class="t" style="right:597.20px;top:1030.95px;font-size:14px;line-height:14px;color:#212121;font-weight:400;text-align:right;letter-spacing:-0.2px">999 hPa</div>
<svg class="a" style="left:865px;top:1076px;width:24px;height:24px" viewBox="0 0 24 24"><path fill="#44739e" d="M15,13V5A3,3 0 0,0 9,5V13A5,5 0 1,0 15,13M12,4A1,1 0 0,1 13,5V8H11V5A1,1 0 0,1 12,4Z"/></svg>
<div class="t" style="left:913.00px;top:1079.95px;font-size:14px;line-height:14px;color:#212121;font-weight:400;letter-spacing:-0.1px">Kitchen eTRV2 Temp</div>
<div class="t" style="right:597.35px;top:1079.95px;font-size:14px;line-height:14px;color:#212121;font-weight:400;text-align:right;letter-spacing:-0.35px">23.2 °C</div>
<svg class="a" style="left:865px;top:1125px;width:24px;height:24px" viewBox="0 0 24 24"><path fill="#44739e" d="M7.95,3L6.53,5.19L7.95,7.4H7.94L5.95,10.5L4.22,9.5L5.64,7.39L4.22,5.19L6.22,2H7.95V3M13.96,3L12.54,5.19L13.96,7.4H13.95L11.96,10.5L10.23,9.5L11.65,7.39L10.23,5.19L12.23,2H13.96V3M19.97,3L18.55,5.19L19.97,7.4H19.96L17.97,10.5L16.24,9.5L17.66,7.39L16.24,5.19L18.24,2H19.97V3M2,22V14A2,2 0 0,1 4,12H20A2,2 0 0,1 22,14V22H20V20H4V22H2M6,14A1,1 0 0,0 5,15V17A1,1 0 0,0 6,18A1,1 0 0,0 7,17V15A1,1 0 0,0 6,14M10,14A1,1 0 0,0 9,15V17A1,1 0 0,0 10,18A1,1 0 0,0 11,17V15A1,1 0 0,0 10,14M14,14A1,1 0 0,0 13,15V17A1,1 0 0,0 14,18A1,1 0 0,0 15,17V15A1,1 0 0,0 14,14M18,14A1,1 0 0,0 17,15V17A1,1 0 0,0 18,18A1,1 0 0,0 19,17V15A1,1 0 0,0 18,14Z"/></svg>
<div class="t" style="left:913.00px;top:1128.95px;font-size:14px;line-height:14px;color:#212121;font-weight:400;letter-spacing:-0.1px">Kitchen eTRV2 Heating</div>
<div class="t" style="right:597.00px;top:1128.95px;font-size:14px;line-height:14px;color:#212121;font-weight:400;text-align:right;letter-spacing:0px">3 <span style="display:inline-block;width:10.4px;overflow:visible"><span style="display:inline-block;transform:scaleX(0.84);transform-origin:0 0">%</span></span></div>
<div class="card" style="left:1341px;top:239px;width:492px;height:309px"></div>
<svg class="a" style="left:1341px;top:239px;width:492px;height:309px" viewBox="1341 239 492 309"><path d="M1686.85,320.45 A116,116 0 0,1 1669.02,461.52" fill="none" stroke="#bdbdbd" stroke-width="3" stroke-linecap="round"/><path d="M1504.98,461.52 A116,116 0 1,1 1686.85,320.45" fill="none" stroke="#008000" stroke-width="3" stroke-linecap="round"/><circle cx="1686.85" cy="320.45" r="5.8" fill="#008000"/></svg>
<svg class="a" style="left:1801px;top:247px;width:24px;height:24px" viewBox="0 0 24 24"><path fill="#727272" d="M12,16A2,2 0 0,1 14,18A2,2 0 0,1 12,20A2,2 0 0,1 10,18A2,2 0 0,1 12,16M12,10A2,2 0 0,1 14,12A2,2 0 0,1 12,14A2,2 0 0,1 10,12A2,2 0 0,1 12,10M12,4A2,2 0 0,1 14,6A2,2 0 0,1 12,8A2,2 0 0,1 10,6A2,2 0 0,1 12,4Z"/></svg>
<div class="t" style="left:1334.2px;width:492px;text-align:center;top:320.59px;font-size:69px;line-height:69px;color:#212121"><span style="position:relative;letter-spacing:-0.5px">23.3<span style="position:absolute;left:100%;top:11px;margin-left:2.5px;font-size:20px;line-height:20px;letter-spacing:0">&deg;C</span></span></div>
<div class="t" style="left:1287.00px;width:600px;text-align:center;top:404.72px;font-size:19px;line-height:19px;color:#212121;font-weight:400;">23.0</div>
<div class="t" style="left:1287.00px;width:600px;text-align:center;top:429.80px;font-size:15px;line-height:15px;color:#7f7f7f;font-weight:400;">Auto</div>
<svg class="a" style="left:1553px;top:480px;width:24px;height:24px" viewBox="0 0 24 24"><path fill="#008000" d="M6,1H8V3H16V1H18V3H19A2,2 0 0,1 21,5V10.5H19V8H5V19H12.5V21H5A2,2 0 0,1 3,19V5A2,2 0 0,1 5,3H6Z"/><path fill="#008000" transform="translate(17.7,16.8) scale(0.45) translate(-12,-12)" stroke="#008000" stroke-width="0.8" d="M12,6V9L16,5L12,1V4A8,8 0 0,0 4,12C4,13.57 4.46,15.03 5.24,16.26L6.7,14.8C6.25,13.97 6,13 6,12A6,6 0 0,1 12,6M18.76,7.74L17.3,9.2C17.74,10.04 18,11 18,12A6,6 0 0,1 12,18V15L8,19L12,23V20A8,8 0 0,0 20,12C20,10.43 19.54,8.97 18.76,7.74Z"/></svg>
<svg class="a" style="left:1597px;top:480px;width:24px;height:24px" viewBox="0 0 24 24"><path fill="#bdbdbd" d="M17.66,11.2C17.43,10.9 17.15,10.64 16.89,10.38C16.22,9.78 15.46,9.35 14.82,8.72C13.33,7.26 13,4.85 13.95,3C13,3.23 12.17,3.75 11.46,4.32C8.87,6.4 7.85,10.07 9.07,13.22C9.11,13.32 9.15,13.42 9.15,13.55C9.15,13.77 9,13.97 8.8,14.05C8.57,14.15 8.33,14.09 8.14,13.93C8.08,13.88 8.04,13.83 8,13.76C6.87,12.33 6.69,10.28 7.45,8.64C5.78,10 4.87,12.3 5,14.47C5.06,14.97 5.12,15.47 5.29,15.97C5.43,16.57 5.7,17.17 6,17.7C7.08,19.43 8.95,20.67 10.96,20.92C13.1,21.19 15.39,20.8 17.03,19.32C18.86,17.66 19.5,15 18.56,12.72L18.43,12.46C18.22,12 17.66,11.2 17.66,11.2M14.5,17.5C14.22,17.74 13.76,18 13.4,18.1C12.28,18.5 11.16,17.94 10.5,17.28C11.69,17 12.4,16.12 12.61,15.23C12.78,14.43 12.46,13.77 12.33,13C12.21,12.26 12.23,11.63 12.5,10.94C12.69,11.32 12.89,11.7 13.13,12C13.9,13 15.11,13.44 15.37,14.8C15.41,14.94 15.43,15.08 15.43,15.23C15.46,16.05 15.1,16.95 14.5,17.5H14.5Z"/></svg>
<div class="t" style="left:1287.00px;width:600px;text-align:center;top:515.16px;font-size:16px;line-height:16px;color:#212121;font-weight:400;letter-spacing:0.2px">Bedroom</div>
<div class="card" style="left:1341px;top:556px;width:492px;height:186px"></div>
<div class="t" style="left:1357.00px;top:583.98px;font-size:24px;line-height:24px;color:#212121;font-weight:400;letter-spacing:-0.29px">Hallway</div>
<svg class="a" style="left:1365px;top:637px;width:24px;height:24px" viewBox="0 0 24 24"><path fill="#44739e" d="M15,13V5A3,3 0 0,0 9,5V13A5,5 0 1,0 15,13M12,4A1,1 0 0,1 13,5V8H11V5A1,1 0 0,1 12,4Z"/></svg>
<div class="t" style="left:1413.00px;top:640.95px;font-size:14px;line-height:14px;color:#212121;font-weight:400;letter-spacing:-0.1px">Hallway eTRV2 Temp</div>
<div class="t" style="right:97.35px;top:640.95px;font-size:14px;line-height:14px;color:#212121;font-weight:400;text-align:right;letter-spacing:-0.35px">23.3 °C</div>
<svg class="a" style="left:1365px;top:686px;width:24px;height:24px" viewBox="0 0 24 24"><path fill="#44739e" d="M7.95,3L6.53,5.19L7.95,7.4H7.94L5.95,10.5L4.22,9.5L5.64,7.39L4.22,5.19L6.22,2H7.95V3M13.96,3L12.54,5.19L13.96,7.4H13.95L11.96,10.5L10.23,9.5L11.65,7.39L10.23,5.19L12.23,2H13.96V3M19.97,3L18.55,5.19L19.97,7.4H19.96L17.97,10.5L16.24,9.5L17.66,7.39L16.24,5.19L18.24,2H19.97V3M2,22V14A2,2 0 0,1 4,12H20A2,2 0 0,1 22,14V22H20V20H4V22H2M6,14A1,1 0 0,0 5,15V17A1,1 0 0,0 6,18A1,1 0 0,0 7,17V15A1,1 0 0,0 6,14M10,14A1,1 0 0,0 9,15V17A1,1 0 0,0 10,18A1,1 0 0,0 11,17V15A1,1 0 0,0 10,14M14,14A1,1 0 0,0 13,15V17A1,1 0 0,0 14,18A1,1 0 0,0 15,17V15A1,1 0 0,0 14,14M18,14A1,1 0 0,0 17,15V17A1,1 0 0,0 18,18A1,1 0 0,0 19,17V15A1,1 0 0,0 18,14Z"/></svg>
<div class="t" style="left:1413.00px;top:689.95px;font-size:14px;line-height:14px;color:#212121;font-weight:400;letter-spacing:-0.1px">Hallway eTRV2 Heating</div>
<div class="t" style="right:97.00px;top:689.95px;font-size:14px;line-height:14px;color:#212121;font-weight:400;text-align:right;letter-spacing:0px">0 <span style="display:inline-block;width:10.4px;overflow:visible"><span style="display:inline-block;transform:scaleX(0.84);transform-origin:0 0">%</span></span></div>
<div class="card" style="left:1341px;top:750px;width:492px;height:309px"></div>
<svg class="a" style="left:1341px;top:750px;width:492px;height:309px" viewBox="1341 750 492 309"><path d="M1686.85,831.45 A116,116 0 0,1 1669.02,972.52" fill="none" stroke="#bdbdbd" stroke-width="3" stroke-linecap="round"/><path d="M1504.98,972.52 A116,116 0 1,1 1686.85,831.45" fill="none" stroke="#008000" stroke-width="3" stroke-linecap="round"/><circle cx="1686.85" cy="831.45" r="5.8" fill="#008000"/></svg>
<svg class="a" style="left:1801px;top:758px;width:24px;height:24px" viewBox="0 0 24 24"><path fill="#727272" d="M12,16A2,2 0 0,1 14,18A2,2 0 0,1 12,20A2,2 0 0,1 10,18A2,2 0 0,1 12,16M12,10A2,2 0 0,1 14,12A2,2 0 0,1 12,14A2,2 0 0,1 10,12A2,2 0 0,1 12,10M12,4A2,2 0 0,1 14,6A2,2 0 0,1 12,8A2,2 0 0,1 10,6A2,2 0 0,1 12,4Z"/></svg>
<div class="t" style="left:1334.2px;width:492px;text-align:center;top:831.59px;font-size:69px;line-height:69px;color:#212121"><span style="position:relative;letter-spacing:-0.5px">23.1<span style="position:absolute;left:100%;top:11px;margin-left:2.5px;font-size:20px;line-height:20px;letter-spacing:0">&deg;C</span></span></div>
<div class="t" style="left:1287.00px;width:600px;text-align:center;top:915.72px;font-size:19px;line-height:19px;color:#212121;font-weight:400;">23.0</div>
<div class="t" style="left:1287.00px;width:600px;text-align:center;top:940.80px;font-size:15px;line-height:15px;color:#7f7f7f;font-weight:400;">Auto</div>
<svg class="a" style="left:1553px;top:991px;width:24px;height:24px" viewBox="0 0 24 24"><path fill="#008000" d="M6,1H8V3H16V1H18V3H19A2,2 0 0,1 21,5V10.5H19V8H5V19H12.5V21H5A2,2 0 0,1 3,19V5A2,2 0 0,1 5,3H6Z"/><path fill="#008000" transform="translate(17.7,16.8) scale(0.45) translate(-12,-12)" stroke="#008000" stroke-width="0.8" d="M12,6V9L16,5L12,1V4A8,8 0 0,0 4,12C4,13.57 4.46,15.03 5.24,16.26L6.7,14.8C6.25,13.97 6,13 6,12A6,6 0 0,1 12,6M18.76,7.74L17.3,9.2C17.74,10.04 18,11 18,12A6,6 0 0,1 12,18V15L8,19L12,23V20A8,8 0 0,0 20,12C20,10.43 19.54,8.97 18.76,7.74Z"/></svg>
<svg class="a" style="left:1597px;top:991px;width:24px;height:24px" viewBox="0 0 24 24"><path fill="#bdbdbd" d="M17.66,11.2C17.43,10.9 17.15,10.64 16.89,10.38C16.22,9.78 15.46,9.35 14.82,8.72C13.33,7.26 13,4.85 13.95,3C13,3.23 12.17,3.75 11.46,4.32C8.87,6.4 7.85,10.07 9.07,13.22C9.11,13.32 9.15,13.42 9.15,13.55C9.15,13.77 9,13.97 8.8,14.05C8.57,14.15 8.33,14.09 8.14,13.93C8.08,13.88 8.04,13.83 8,13.76C6.87,12.33 6.69,10.28 7.45,8.64C5.78,10 4.87,12.3 5,14.47C5.06,14.97 5.12,15.47 5.29,15.97C5.43,16.57 5.7,17.17 6,17.7C7.08,19.43 8.95,20.67 10.96,20.92C13.1,21.19 15.39,20.8 17.03,19.32C18.86,17.66 19.5,15 18.56,12.72L18.43,12.46C18.22,12 17.66,11.2 17.66,11.2M14.5,17.5C14.22,17.74 13.76,18 13.4,18.1C12.28,18.5 11.16,17.94 10.5,17.28C11.69,17 12.4,16.12 12.61,15.23C12.78,14.43 12.46,13.77 12.33,13C12.21,12.26 12.23,11.63 12.5,10.94C12.69,11.32 12.89,11.7 13.13,12C13.9,13 15.11,13.44 15.37,14.8C15.41,14.94 15.43,15.08 15.43,15.23C15.46,16.05 15.1,16.95 14.5,17.5H14.5Z"/></svg>
<div class="t" style="left:1287.00px;width:600px;text-align:center;top:1026.16px;font-size:16px;line-height:16px;color:#212121;font-weight:400;letter-spacing:0.2px">Kid Room</div>
<div class="card" style="left:1341px;top:1067px;width:492px;height:309px"></div>
<svg class="a" style="left:1341px;top:1067px;width:492px;height:309px" viewBox="1341 1067 492 309"><path d="M1686.85,1148.45 A116,116 0 0,1 1669.02,1289.52" fill="none" stroke="#bdbdbd" stroke-width="3" stroke-linecap="round"/><path d="M1504.98,1289.52 A116,116 0 1,1 1686.85,1148.45" fill="none" stroke="#008000" stroke-width="3" stroke-linecap="round"/><circle cx="1686.85" cy="1148.45" r="5.8" fill="#008000"/></svg>
<svg class="a" style="left:1801px;top:1075px;width:24px;height:24px" viewBox="0 0 24 24"><path fill="#727272" d="M12,16A2,2 0 0,1 14,18A2,2 0 0,1 12,20A2,2 0 0,1 10,18A2,2 0 0,1 12,16M12,10A2,2 0 0,1 14,12A2,2 0 0,1 12,14A2,2 0 0,1 10,12A2,2 0 0,1 12,10M12,4A2,2 0 0,1 14,6A2,2 0 0,1 12,8A2,2 0 0,1 10,6A2,2 0 0,1 12,4Z"/></svg>
<div class="t" style="left:1334.2px;width:492px;text-align:center;top:1148.59px;font-size:69px;line-height:69px;color:#212121"><span style="position:relative;letter-spacing:-0.5px">23<span style="position:absolute;left:100%;top:11px;margin-left:2.5px;font-size:20px;line-height:20px;letter-spacing:0">&deg;C</span></span></div>
<div class="t" style="left:1287.00px;width:600px;text-align:center;top:1232.72px;font-size:19px;line-height:19px;color:#212121;font-weight:400;">23.0</div>
<div class="t" style="left:1287.00px;width:600px;text-align:center;top:1257.80px;font-size:15px;line-height:15px;color:#7f7f7f;font-weight:400;">Auto</div>
<svg class="a" style="left:1553px;top:1308px;width:24px;height:24px" viewBox="0 0 24 24"><path fill="#008000" d="M6,1H8V3H16V1H18V3H19A2,2 0 0,1 21,5V10.5H19V8H5V19H12.5V21H5A2,2 0 0,1 3,19V5A2,2 0 0,1 5,3H6Z"/><path fill="#008000" transform="translate(17.7,16.8) scale(0.45) translate(-12,-12)" stroke="#008000" stroke-width="0.8" d="M12,6V9L16,5L12,1V4A8,8 0 0,0 4,12C4,13.57 4.46,15.03 5.24,16.26L6.7,14.8C6.25,13.97 6,13 6,12A6,6 0 0,1 12,6M18.76,7.74L17.3,9.2C17.74,10.04 18,11 18,12A6,6 0 0,1 12,18V15L8,19L12,23V20A8,8 0 0,0 20,12C20,10.43 19.54,8.97 18.76,7.74Z"/></svg>
<svg class="a" style="left:1597px;top:1308px;width:24px;height:24px" viewBox="0 0 24 24"><path fill="#bdbdbd" d="M17.66,11.2C17.43,10.9 17.15,10.64 16.89,10.38C16.22,9.78 15.46,9.35 14.82,8.72C13.33,7.26 13,4.85 13.95,3C13,3.23 12.17,3.75 11.46,4.32C8.87,6.4 7.85,10.07 9.07,13.22C9.11,13.32 9.15,13.42 9.15,13.55C9.15,13.77 9,13.97 8.8,14.05C8.57,14.15 8.33,14.09 8.14,13.93C8.08,13.88 8.04,13.83 8,13.76C6.87,12.33 6.69,10.28 7.45,8.64C5.78,10 4.87,12.3 5,14.47C5.06,14.97 5.12,15.47 5.29,15.97C5.43,16.57 5.7,17.17 6,17.7C7.08,19.43 8.95,20.67 10.96,20.92C13.1,21.19 15.39,20.8 17.03,19.32C18.86,17.66 19.5,15 18.56,12.72L18.43,12.46C18.22,12 17.66,11.2 17.66,11.2M14.5,17.5C14.22,17.74 13.76,18 13.4,18.1C12.28,18.5 11.16,17.94 10.5,17.28C11.69,17 12.4,16.12 12.61,15.23C12.78,14.43 12.46,13.77 12.33,13C12.21,12.26 12.23,11.63 12.5,10.94C12.69,11.32 12.89,11.7 13.13,12C13.9,13 15.11,13.44 15.37,14.8C15.41,14.94 15.43,15.08 15.43,15.23C15.46,16.05 15.1,16.95 14.5,17.5H14.5Z"/></svg>
<div class="t" style="left:1287.00px;width:600px;text-align:center;top:1343.16px;font-size:16px;line-height:16px;color:#212121;font-weight:400;letter-spacing:0.2px">Living Room</div>
</body></html>
